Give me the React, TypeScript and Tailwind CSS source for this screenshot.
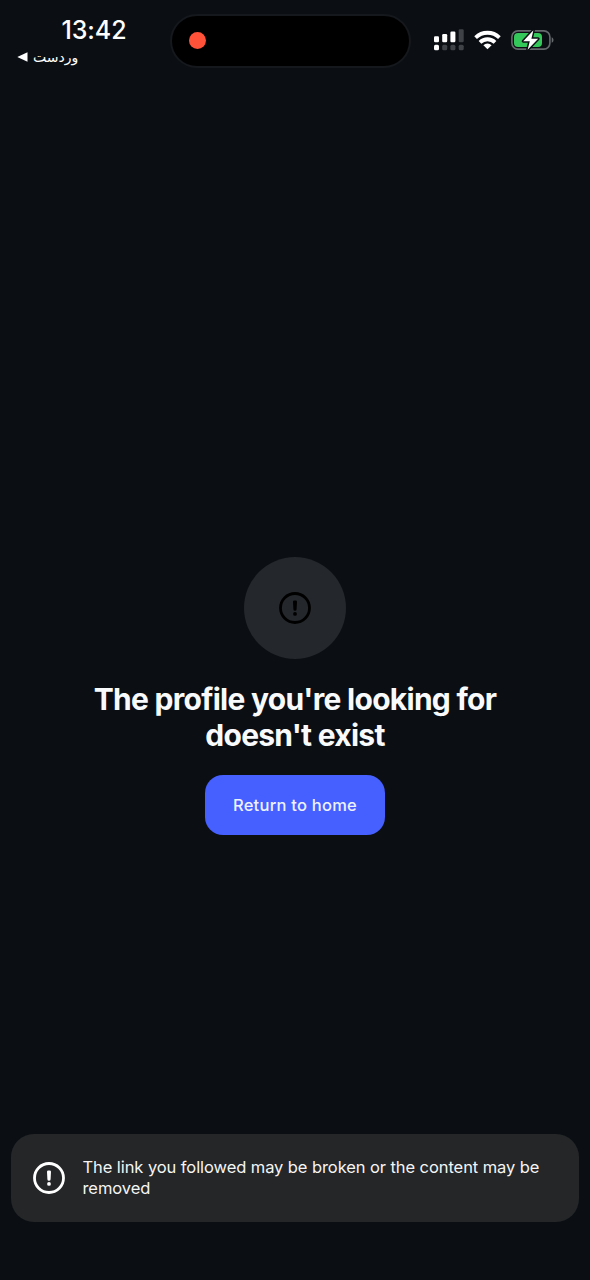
const AlertIcon = ({ className }: { className?: string }) => (
    <svg viewBox="0 0 32 32" fill="none" className={className}>
        <circle cx="16" cy="16" r="14.5" stroke="currentColor" strokeWidth="2.8" />
        <path d="M14 9.8a1.3 1.3 0 0 1 1.3-1.3h1.4a1.3 1.3 0 0 1 1.3 1.3l-.4 7.4a1.6 1.6 0 0 1-3.2 0z" fill="currentColor" />
        <circle cx="16" cy="21.9" r="1.9" fill="currentColor" />
    </svg>
);

const SignalIcon = () => (
    <svg width="30" height="22" viewBox="0 0 30 22">
        <g fill="#fff">
            <rect x="0" y="7.3" width="5" height="6" rx="1.2" />
            <rect x="8.2" y="5" width="5" height="8.3" rx="1.2" />
            <rect x="16.4" y="2.6" width="5" height="10.7" rx="1.2" />
            <rect x="0" y="15.8" width="5" height="5.4" rx="1.5" />
        </g>
        <g fill="#3f4246">
            <rect x="24.7" y="0.3" width="5" height="13" rx="1.2" />
            <rect x="8.2" y="15.8" width="5" height="5.4" rx="1.5" />
            <rect x="16.4" y="15.8" width="5" height="5.4" rx="1.5" />
            <rect x="24.7" y="15.8" width="5" height="5.4" rx="1.5" />
        </g>
    </svg>
);

const WifiIcon = () => (
    <svg width="27" height="20" viewBox="0 0 27 20" fill="none" stroke="#fff" strokeWidth="3.8">
        <path d="M1.6 7.6a17 17 0 0 1 23.8 0" />
        <path d="M6 12.3a10.7 10.7 0 0 1 15 0" />
        <path d="M13.5 19.3l-4.1-4.1a5.9 5.9 0 0 1 8.2 0z" fill="#fff" stroke="none" />
    </svg>
);

const BatteryIcon = () => (
    <svg width="43" height="24" viewBox="0 0 43 24">
        <rect x="0.9" y="2.9" width="38" height="18.2" rx="6" fill="none" stroke="#66696c" strokeWidth="1.6" />
        <path d="M40.7 9.2c2.4 1 2.4 4.6 0 5.6z" fill="#66696c" />
        <rect x="3" y="5" width="28" height="14" rx="4" fill="#34c759" />
        <path
            d="M22.4 2.2L12.2 13.2h6.6l-2.2 8.6L27.2 10.8h-6.8z"
            fill="#fff"
            stroke="#0b0f14"
            strokeWidth="3"
            strokeLinejoin="round"
            paintOrder="stroke"
        />
    </svg>
);

const StatusBar = () => (
    <header className="flex h-20 shrink-0 text-white">
        <div className="w-[170px] pt-[14px]">
            <p className="pl-[61.5px] text-[25px] leading-8 font-medium tracking-[-0.1px]">13:42</p>
            <div className="flex h-[21px] items-center gap-[5px] pl-[17px]">
                <svg width="11" height="10" viewBox="0 0 11 10">
                    <path d="M0.3 5L10.5 0.3v9.4z" fill="#fff" />
                </svg>
                <span dir="rtl" className="font-['DejaVu_Sans',sans-serif] text-[14px] leading-5">وردست</span>
            </div>
        </div>
        <div className="mt-[13.5px] flex h-[54px] w-[241px] items-center rounded-full border-2 border-[#15181c] bg-black pl-[17px]">
            <span className="size-[17px] rounded-full bg-[#ff5238]" />
        </div>
        <div className="ml-[23px] mt-[28px] flex h-6 items-center">
            <SignalIcon />
            <div className="ml-[10px]"><WifiIcon /></div>
            <div className="ml-[10px]"><BatteryIcon /></div>
        </div>
    </header>
);

const NotFound = () => (
    <main className="flex flex-1 flex-col items-center pt-[476.5px]">
        <div className="flex size-[102px] items-center justify-center rounded-full bg-[#24272b]">
            <AlertIcon className="size-8 text-black" />
        </div>
        <h1 className="mt-[22.5px] w-[440px] text-center text-[30px] leading-9 font-bold tracking-[-0.73px] text-[#f8fafc]">
            The profile you're looking for doesn't exist
        </h1>
        <button className="mt-[21.5px] h-[60.5px] w-[180px] rounded-[18px] bg-[#465fff] pt-px text-[16.5px] font-medium tracking-[0.24px] text-[#eef2ff]">
            Return to home
        </button>
    </main>
);

const Toast = () => (
    <div className="mx-[11px] mb-[58px] flex h-[88px] items-center rounded-[23px] bg-[#242628] pl-[22px] text-[#f5f5f5]">
        <AlertIcon className="size-8 shrink-0 text-white" />
        <p className="ml-[17.5px] w-[470px] text-[16.5px] leading-[21px] tracking-[-0.08px]">
            The link you followed may be broken or the content may be removed
        </p>
    </div>
);

const App = () => {
    return (
        <div className="flex h-[1280px] w-[590px] flex-col bg-[#0b0f14] font-['Inter',sans-serif]">
            <StatusBar />
            <NotFound />
            <Toast />
        </div>
    );
};

export default App;
